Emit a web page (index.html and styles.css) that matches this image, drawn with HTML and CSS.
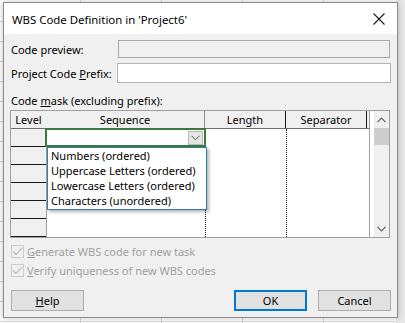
FILE: index.html
```html
<!DOCTYPE html>
<html>
<head>
<meta charset="utf-8">
<link rel="stylesheet" href="styles.css">
</head>
<body>
<div class="desk">
  <div class="dialog">
    <div class="titlebar">
      <span class="title">WBS Code Definition in 'Project6'</span>
      <svg class="close" width="12" height="12" viewBox="0 0 12 12"><path d="M0.5 0.5L11.5 11.5M11.5 0.5L0.5 11.5" stroke="#1a1a1a" stroke-width="1.1" fill="none"/></svg>
    </div>
    <div class="content">
      <div class="row preview-row">
        <span class="label">Code preview:</span>
        <div class="field disabled"></div>
      </div>
      <div class="row prefix-row">
        <span class="label">Project Code <u>P</u>refix:</span>
        <div class="field"></div>
      </div>
      <div class="mask-label">Code <u>m</u>ask (excluding prefix):</div>
      <div class="grid">
        <div class="table">
          <div class="head">
            <div class="hc c-level">Level</div>
            <div class="hc c-seq">Sequence</div>
            <div class="hc c-len">Length</div>
            <div class="hc c-sep">Separator</div>
          </div>
          <div class="body">
            <div class="col-level">
              <div class="lc"></div><div class="lc"></div><div class="lc"></div><div class="lc"></div><div class="lc"></div><div class="lc"></div>
            </div>
            <div class="col c-seq"></div>
            <div class="col c-len dotted"></div>
            <div class="col c-sep dotted"></div>
          </div>
          <div class="combo">
            <div class="drop-btn">
              <svg width="9" height="6" viewBox="0 0 9 6"><path d="M0.5 0.8L4.5 4.8L8.5 0.8" stroke="#555" stroke-width="1" fill="none"/></svg>
            </div>
          </div>
          <div class="list">
            <div class="item">Numbers (ordered)</div>
            <div class="item">Uppercase Letters (ordered)</div>
            <div class="item">Lowercase Letters (ordered)</div>
            <div class="item">Characters (unordered)</div>
          </div>
        </div>
        <div class="scroll">
          <svg width="9" height="6" viewBox="0 0 9 6"><path d="M0.5 5.2L4.5 1.2L8.5 5.2" stroke="#606060" stroke-width="1.2" fill="none"/></svg>
          <div class="thumb"></div>
          <div class="track"></div>
          <svg width="9" height="6" viewBox="0 0 9 6"><path d="M0.5 0.8L4.5 4.8L8.5 0.8" stroke="#606060" stroke-width="1.2" fill="none"/></svg>
        </div>
      </div>
      <div class="checks">
        <label class="check"><span class="box"><svg width="11" height="9" viewBox="0 0 11 9"><path d="M1 4.5L4 7.5L10 1" stroke="#b4b4b4" stroke-width="1.1" fill="none"/></svg></span><span><u>G</u>enerate WBS code for new task</span></label>
        <label class="check"><span class="box"><svg width="11" height="9" viewBox="0 0 11 9"><path d="M1 4.5L4 7.5L10 1" stroke="#b4b4b4" stroke-width="1.1" fill="none"/></svg></span><span><u>V</u>erify uniqueness of new WBS codes</span></label>
      </div>
      <div class="buttons">
        <div class="btn"><u>H</u>elp</div>
        <div class="spacer"></div>
        <div class="btn default">OK</div>
        <div class="btn">Cancel</div>
      </div>
    </div>
  </div>
</div>
</body>
</html>
```
FILE: styles.css
```css
html, body {
  margin: 0;
  padding: 0;
}
body {
  width: 405px;
  height: 323px;
  overflow: hidden;
  font-family: "Noto Sans", "Open Sans", sans-serif;
  font-size: 11px;
  line-height: 15px;
  color: #000;
}
.desk {
  position: relative;
  width: 405px;
  height: 323px;
  background-color: #fff;
  background-image:
    linear-gradient(to right, transparent 396px, #e8e8e8 396px),
    repeating-linear-gradient(to bottom, transparent 0, transparent 19px, #d9d9d9 19px, #d9d9d9 20px),
    repeating-linear-gradient(to right, transparent 0, transparent 80px, #d9d9d9 80px, #d9d9d9 81px);
  background-position: 0 0, 0 2px, 0 0;
}
.dialog {
  position: absolute;
  left: 3px;
  top: 2px;
  width: 393px;
  height: 314px;
  border: 1px solid #8c8c8c;
  background: #f0f0f0;
  box-shadow: 0 0 6px rgba(0,0,0,0.25);
  display: flex;
  flex-direction: column;
}
.titlebar {
  height: 31px;
  background: #fff;
  display: flex;
  align-items: center;
  padding-left: 8px;
  padding-right: 12px;
  flex-shrink: 0;
}
.title {
  flex: 1;
  font-size: 11.4px;
  padding-top: 1px;
}
.close {
  display: block;
}
.content {
  padding: 6px 6px 0 7px;
  display: flex;
  flex-direction: column;
}
.row {
  display: flex;
  align-items: center;
  white-space: nowrap;
}
.label {
  flex: 1;
  white-space: nowrap;
}
.field {
  height: 18px;
  background: #fff;
  border: 1px solid #a0a0a0;
  box-sizing: border-box;
  flex-shrink: 0;
}
.preview-row { height: 18px; }
.preview-row .field {
  width: 272px;
  margin-right: 1px;
  background: #f0f0f0;
  border-color: #a8a8a8;
}
.prefix-row {
  margin-top: 5px;
  height: 20px;
}
.prefix-row .field {
  width: 274px;
  height: 20px;
  border-color: #b4b4b4;
}
.mask-label {
  margin-top: 9px;
  height: 17px;
  line-height: 17px;
  white-space: nowrap;
}
u {
  text-decoration: underline;
  text-underline-offset: 1px;
}
.grid {
  margin-top: 1px;
  margin-left: -1px;
  width: 380px;
  height: 128px;
  box-sizing: border-box;
  border: 1px solid #a0a0a0;
  background: #fff;
  display: flex;
}
.table {
  position: relative;
  width: 358px;
  display: flex;
  flex-direction: column;
  border-right: 1px solid #a0a0a0;
}
.head {
  height: 18px;
  display: flex;
  background: #f0f0f0;
  border-bottom: 1px solid #6e6e6e;
}
.hc {
  text-align: center;
  line-height: 17px;
  box-sizing: border-box;
}
.c-level { width: 35px; }
.c-seq { width: 159px; }
.c-len { width: 81px; }
.c-sep { width: 81px; }
.head .c-seq { border-right: 1px solid #8c8c8c; }
.head .c-len { border-right: 1px solid #1a1a1a; }
.head .c-sep { border-right: 1px solid #1a1a1a; }
.body {
  flex: 1;
  display: flex;
}
.col-level {
  width: 35px;
  display: flex;
  flex-direction: column;
}
.lc {
  height: 17px;
  background: #f0f0f0;
  border-bottom: 1px solid #1a1a1a;
}
.col {
  box-sizing: border-box;
}
.dotted {
  border-left: 1px dotted #1a1a1a;
}
.body .c-seq { border-left: 1px solid #a0a0a0; }
.combo {
  position: absolute;
  left: 34px;
  top: 17px;
  width: 161px;
  height: 19px;
  box-sizing: border-box;
  border: 2px solid #3b7a3b;
  background: #fff;
  display: flex;
  justify-content: flex-end;
  align-items: center;
  padding-right: 1px;
}
.drop-btn {
  width: 15px;
  height: 14px;
  box-sizing: border-box;
  background: #e5e5e5;
  border: 1px solid #b9b9b9;
  display: flex;
  align-items: center;
  justify-content: center;
}
.drop-btn svg { display: block; }
.list {
  position: absolute;
  left: 36px;
  top: 36px;
  width: 160px;
  height: 63px;
  box-sizing: border-box;
  border: 1px solid #2e7fa8;
  background: #fff;
  box-shadow: 2px 2px 3px rgba(0,0,0,0.3);
  padding: 0 0 0 3px;
}
.item {
  height: 15px;
  line-height: 15px;
  white-space: nowrap;
}
.scroll {
  flex: 1;
  margin-left: 4px;
  background: #f0f0f0;
  display: flex;
  flex-direction: column;
  align-items: center;
  padding-top: 6px;
  padding-bottom: 5px;
}
.scroll svg { display: block; flex-shrink: 0; }
.thumb {
  margin-top: 5px;
  width: 100%;
  height: 17px;
  background: #cdcdcd;
}
.track { flex: 1; }
.checks {
  margin-top: 6px;
  display: flex;
  flex-direction: column;
  gap: 5px;
  color: #a0a0a0;
}
.check {
  display: flex;
  align-items: center;
  height: 14px;
  white-space: nowrap;
}
.box {
  width: 13px;
  height: 13px;
  box-sizing: border-box;
  border: 1px solid #cccccc;
  background: #f0f0f0;
  display: flex;
  align-items: center;
  justify-content: center;
  margin-right: 3px;
}
.box svg { display: block; }
.buttons {
  margin-top: 13px;
  display: flex;
  align-items: center;
  gap: 11px;
}
.spacer { flex: 1; }
.btn {
  width: 73px;
  height: 21px;
  box-sizing: border-box;
  border: 1px solid #adadad;
  background: #e1e1e1;
  display: flex;
  align-items: center;
  justify-content: center;
}
.btn.default {
  border: 2px solid #0078d7;
}
```
